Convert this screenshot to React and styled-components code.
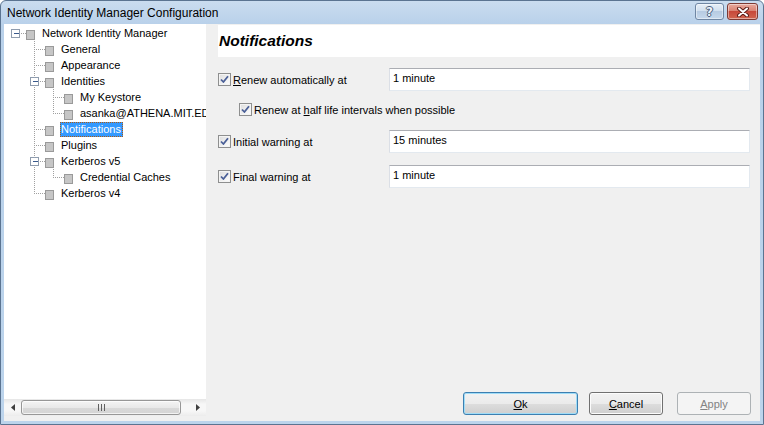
import React from 'react';
import styled, { createGlobalStyle } from 'styled-components';

const Global = createGlobalStyle`
  html, body { margin: 0; padding: 0; }
  body {
    width: 764px; height: 425px; overflow: hidden; background: #fff;
    font-family: "Liberation Sans", Arial, sans-serif;
  }
`;

const Window = styled.div`
  width: 764px; height: 425px; box-sizing: border-box;
  display: flex; flex-direction: column;
  border: 1px solid #5b7491;
  border-radius: 6px 6px 0 0;
  padding: 0 3px 3px 3px;
  background: linear-gradient(#cadcef 0px, #b9d1ea 23px, #bcd4ec 100%);
`;

const TitleBar = styled.div`
  height: 23px; flex: none;
  display: flex; align-items: flex-start;
  padding-left: 3px; padding-right: 2px;
`;

const TitleText = styled.div`
  flex: 1; font-size: 12px; color: #000; line-height: 23px; padding-top: 1px;
  white-space: nowrap;
`;

const CaptionButton = styled.div`
  margin-top: 2px; height: 17px; width: ${p => p.$w}px; box-sizing: border-box;
  margin-left: ${p => p.$ml || 0}px;
  border: 1px solid ${p => (p.$close ? '#7d3a33' : '#6f86a3')};
  border-radius: 3px;
  display: flex; align-items: center; justify-content: center;
  background: ${p => p.$close
    ? 'linear-gradient(#e9a99d 0%, #d98474 45%, #c7493a 50%, #d0654f 100%)'
    : 'linear-gradient(#e7eff8 0%, #d2e0ef 45%, #b7cbe2 50%, #c6d8ec 100%)'};
  box-shadow: inset 0 0 0 1px rgba(255,255,255,0.45);
`;

const HelpGlyph = styled.span`
  font-family: "DejaVu Sans", sans-serif; font-weight: bold; font-size: 12px;
  color: #eef3f9; line-height: 1;
  text-shadow: -1px 0 #4a5f7c, 1px 0 #4a5f7c, 0 -1px #4a5f7c, 0 1px #4a5f7c;
`;

const Client = styled.div`
  flex: 1; display: flex; background: #f0f0f0; min-height: 0;
`;

const LeftPanel = styled.div`
  width: 202px; flex: none; display: flex; flex-direction: column;
  padding-bottom: 5px;
`;

const TreeBox = styled.div`
  flex: 1; background: #fff; overflow: hidden; padding-top: 1px;
`;

const Row = styled.div`
  height: 16px; display: flex; align-items: flex-start; white-space: nowrap;
  font-size: 11px; color: #000;
`;

const NodeIcon = styled.span`
  flex: none; width: 9px; height: 10px; margin-top: 5px; box-sizing: border-box;
  background: #c6c6c6; border: 1px solid #9a9a9a;
`;

const NodeLabel = styled.span`
  margin-left: 6px; padding: 0 2px 0 1px; line-height: 15px; height: 15px;
  margin-top: 1px; box-sizing: border-box;
  background: ${p => (p.$sel ? '#3399ff' : 'transparent')};
  color: ${p => (p.$sel ? '#fff' : '#000')};
  outline: ${p => (p.$sel ? '1px dotted #b05a10' : 'none')};
  outline-offset: -1px;
`;

const HScroll = styled.div`
  height: 17px; flex: none; display: flex; align-items: stretch;
  background: linear-gradient(#e6e6e6, #f7f7f7 30%, #f7f7f7 70%, #ececec);
`;

const ScrollArrow = styled.div`
  width: 17px; flex: none; display: flex; align-items: center; justify-content: center;
`;

const ScrollTrack = styled.div`
  flex: 1; display: flex; padding: 0 8px 0 0;
`;

const Thumb = styled.div`
  flex: 1; margin: 1px 0; box-sizing: border-box;
  border: 1px solid #979797; border-radius: 3px;
  background: linear-gradient(#f4f4f4, #e9e9e9 50%, #d9d9d9 51%, #d4d4d4);
  box-shadow: inset 0 0 0 1px rgba(255,255,255,0.7);
  display: flex; align-items: center; justify-content: center;
`;

const RightPanel = styled.div`
  flex: 1; display: flex; flex-direction: column; padding-left: 12px; min-width: 0;
`;

const Header = styled.div`
  margin-top: 1px; height: 32px; background: #fff; flex: none;
  display: flex; align-items: center; padding-left: 1px;
  font-size: 15.5px; font-weight: bold; font-style: italic; color: #000;
`;

const FormRow = styled.div`
  height: 23px; flex: none; display: flex; align-items: center;
  margin-top: ${p => p.$mt}px; padding-left: ${p => p.$indent || 0}px;
`;

const CheckLabel = styled.label`
  display: flex; align-items: center; width: ${p => p.$w}px; flex: none;
  font-size: 11px; color: #000; white-space: nowrap;
`;

const Box = styled.span`
  width: 13px; height: 13px; flex: none; box-sizing: border-box;
  border: 1px solid #8e8f8f;
  background: linear-gradient(135deg, #dcdcdc, #ffffff);
  box-shadow: inset 0 0 0 1px #f4f4f4;
  display: flex; align-items: center; justify-content: center;
`;

const LabelText = styled.span`
  margin-left: 2px;
`;

const TextInput = styled.div`
  width: 361px; height: 23px; box-sizing: border-box; flex: none;
  background: #fff;
  border: 1px solid #e3e9ef; border-top-color: #abadb3; border-left-color: #dbdfe6;
  font-size: 11px; color: #000; padding-left: 3px; line-height: 19px;
`;

const Spacer = styled.div` flex: 1; `;

const ButtonBar = styled.div`
  display: flex; justify-content: flex-end; padding: 0 9px 6px 0; flex: none;
`;

const Button = styled.div`
  width: ${p => p.$w}px; height: 23px; box-sizing: border-box;
  margin-right: ${p => p.$mr || 0}px;
  border-radius: 3px;
  border: 1px solid ${p => (p.$disabled ? '#adb2b5' : p.$default ? '#3c7fb1' : '#707070')};
  background: ${p => (p.$disabled
    ? '#f4f4f4'
    : 'linear-gradient(#f2f2f2 0%, #ebebeb 50%, #dddddd 51%, #cfcfcf 100%)')};
  box-shadow: ${p => (p.$disabled ? 'none' : p.$default
    ? 'inset 0 0 0 1px #9fdcf7'
    : 'inset 0 0 0 1px #fcfcfc')};
  color: ${p => (p.$disabled ? '#838383' : '#000')};
  font-size: 11px; display: flex; align-items: center; justify-content: center;
`;

const treeData = {
  label: 'Network Identity Manager',
  children: [
    { label: 'General' },
    { label: 'Appearance' },
    { label: 'Identities', children: [{ label: 'My Keystore' }, { label: 'asanka@ATHENA.MIT.EDU' }] },
    { label: 'Notifications', selected: true },
    { label: 'Plugins' },
    { label: 'Kerberos v5', children: [{ label: 'Credential Caches' }] },
    { label: 'Kerberos v4' },
  ],
};

function flatten(node, level, cont, isLast, out) {
  out.push({ label: node.label, level, cont, isLast, hasChildren: !!node.children, selected: node.selected });
  if (node.children) {
    node.children.forEach((c, i) => {
      const last = i === node.children.length - 1;
      flatten(c, level + 1, [...cont, !isLast || level === 0 ? level > 0 ? !isLast : false : false], last, out);
    });
  }
  return out;
}

// cont[a] for a in 1..L-1: whether ancestor at level a has a following sibling
function buildRows() {
  const out = [];
  const walk = (node, level, anc, isLast) => {
    out.push({ label: node.label, level, anc, isLast, hasChildren: !!node.children, selected: node.selected });
    if (node.children) {
      node.children.forEach((c, i) => {
        walk(c, level + 1, level >= 1 ? [...anc, !isLast] : anc, i === node.children.length - 1);
      });
    }
  };
  walk(treeData, 0, [], true);
  return out;
}

const LINE = '#a0a0a0';

function Gutter({ level, anc, isLast, hasChildren }) {
  const w = 22 + 19 * level;
  const ex = 11 + 19 * level;
  return (
    <svg width={w} height={16} style={{ flex: 'none', display: 'block' }}>
      {anc.map((c, i) => c ? (
        <line key={i} x1={11 + 19 * (i + 1) + 0.5} y1={0} x2={11 + 19 * (i + 1) + 0.5} y2={16}
          stroke={LINE} strokeDasharray="1 1" />
      ) : null)}
      {level >= 1 && (
        <line x1={ex + 0.5} y1={0} x2={ex + 0.5} y2={isLast ? 9 : 16} stroke={LINE} strokeDasharray="1 1" />
      )}
      <line x1={ex} y1={8.5} x2={w} y2={8.5} stroke={LINE} strokeDasharray="1 1" />
      {hasChildren && (
        <g>
          <rect x={ex - 3.5} y={4.5} width={8} height={8} fill="#fff" stroke="#8f9cae" />
          <line x1={ex - 1} y1={8.5} x2={ex + 4} y2={8.5} stroke="#3a5a8c" />
        </g>
      )}
    </svg>
  );
}

function Check() {
  return (
    <Box>
      <svg width="9" height="9" viewBox="0 0 9 9">
        <path d="M1 4.5 L3.4 7 L8 1.2" fill="none" stroke="#4a5f97" strokeWidth="1.8" strokeLinejoin="round" />
      </svg>
    </Box>
  );
}

export default function App() {
  const rows = buildRows();
  return (
    <>
      <Global />
      <Window>
        <TitleBar>
          <TitleText>Network Identity Manager Configuration</TitleText>
          <CaptionButton $w={29}><HelpGlyph>?</HelpGlyph></CaptionButton>
          <CaptionButton $w={31} $ml={3} $close>
            <svg width="12" height="10" viewBox="0 0 12 10">
              <path d="M2 1.5 L10 8.5 M10 1.5 L2 8.5" stroke="#5b1c16" strokeWidth="4" strokeLinecap="round" />
              <path d="M2 1.5 L10 8.5 M10 1.5 L2 8.5" stroke="#ffffff" strokeWidth="2" strokeLinecap="round" />
            </svg>
          </CaptionButton>
        </TitleBar>
        <Client>
          <LeftPanel>
            <TreeBox>
              {rows.map((r, i) => (
                <Row key={i}>
                  <Gutter level={r.level} anc={r.anc} isLast={r.isLast} hasChildren={r.hasChildren} />
                  <NodeIcon />
                  <NodeLabel $sel={r.selected}>{r.label}</NodeLabel>
                </Row>
              ))}
            </TreeBox>
            <HScroll>
              <ScrollArrow>
                <svg width="4" height="7" viewBox="0 0 4 7"><path d="M4 0 L0 3.5 L4 7 Z" fill="#404040" /></svg>
              </ScrollArrow>
              <ScrollTrack>
                <Thumb>
                  <svg width="7" height="7" viewBox="0 0 7 7">
                    <path d="M0.5 0 V7 M3.5 0 V7 M6.5 0 V7" stroke="#606060" />
                  </svg>
                </Thumb>
              </ScrollTrack>
              <ScrollArrow>
                <svg width="4" height="7" viewBox="0 0 4 7"><path d="M0 0 L4 3.5 L0 7 Z" fill="#404040" /></svg>
              </ScrollArrow>
            </HScroll>
          </LeftPanel>
          <RightPanel>
            <Header>Notifications</Header>
            <FormRow $mt={11}>
              <CheckLabel $w={171}><Check /><LabelText><u>R</u>enew automatically at</LabelText></CheckLabel>
              <TextInput>1 minute</TextInput>
            </FormRow>
            <FormRow $mt={7} $indent={21}>
              <CheckLabel $w={300}><Check /><LabelText>Renew at <u>h</u>alf life intervals when possible</LabelText></CheckLabel>
            </FormRow>
            <FormRow $mt={9}>
              <CheckLabel $w={171}><Check /><LabelText>Initial warning at</LabelText></CheckLabel>
              <TextInput>15 minutes</TextInput>
            </FormRow>
            <FormRow $mt={12}>
              <CheckLabel $w={171}><Check /><LabelText>Final warning at</LabelText></CheckLabel>
              <TextInput>1 minute</TextInput>
            </FormRow>
            <Spacer />
            <ButtonBar>
              <Button $w={115} $mr={11} $default><u>O</u>k</Button>
              <Button $w={74} $mr={14}><u>C</u>ancel</Button>
              <Button $w={74} $disabled><u>A</u>pply</Button>
            </ButtonBar>
          </RightPanel>
        </Client>
      </Window>
    </>
  );
}
